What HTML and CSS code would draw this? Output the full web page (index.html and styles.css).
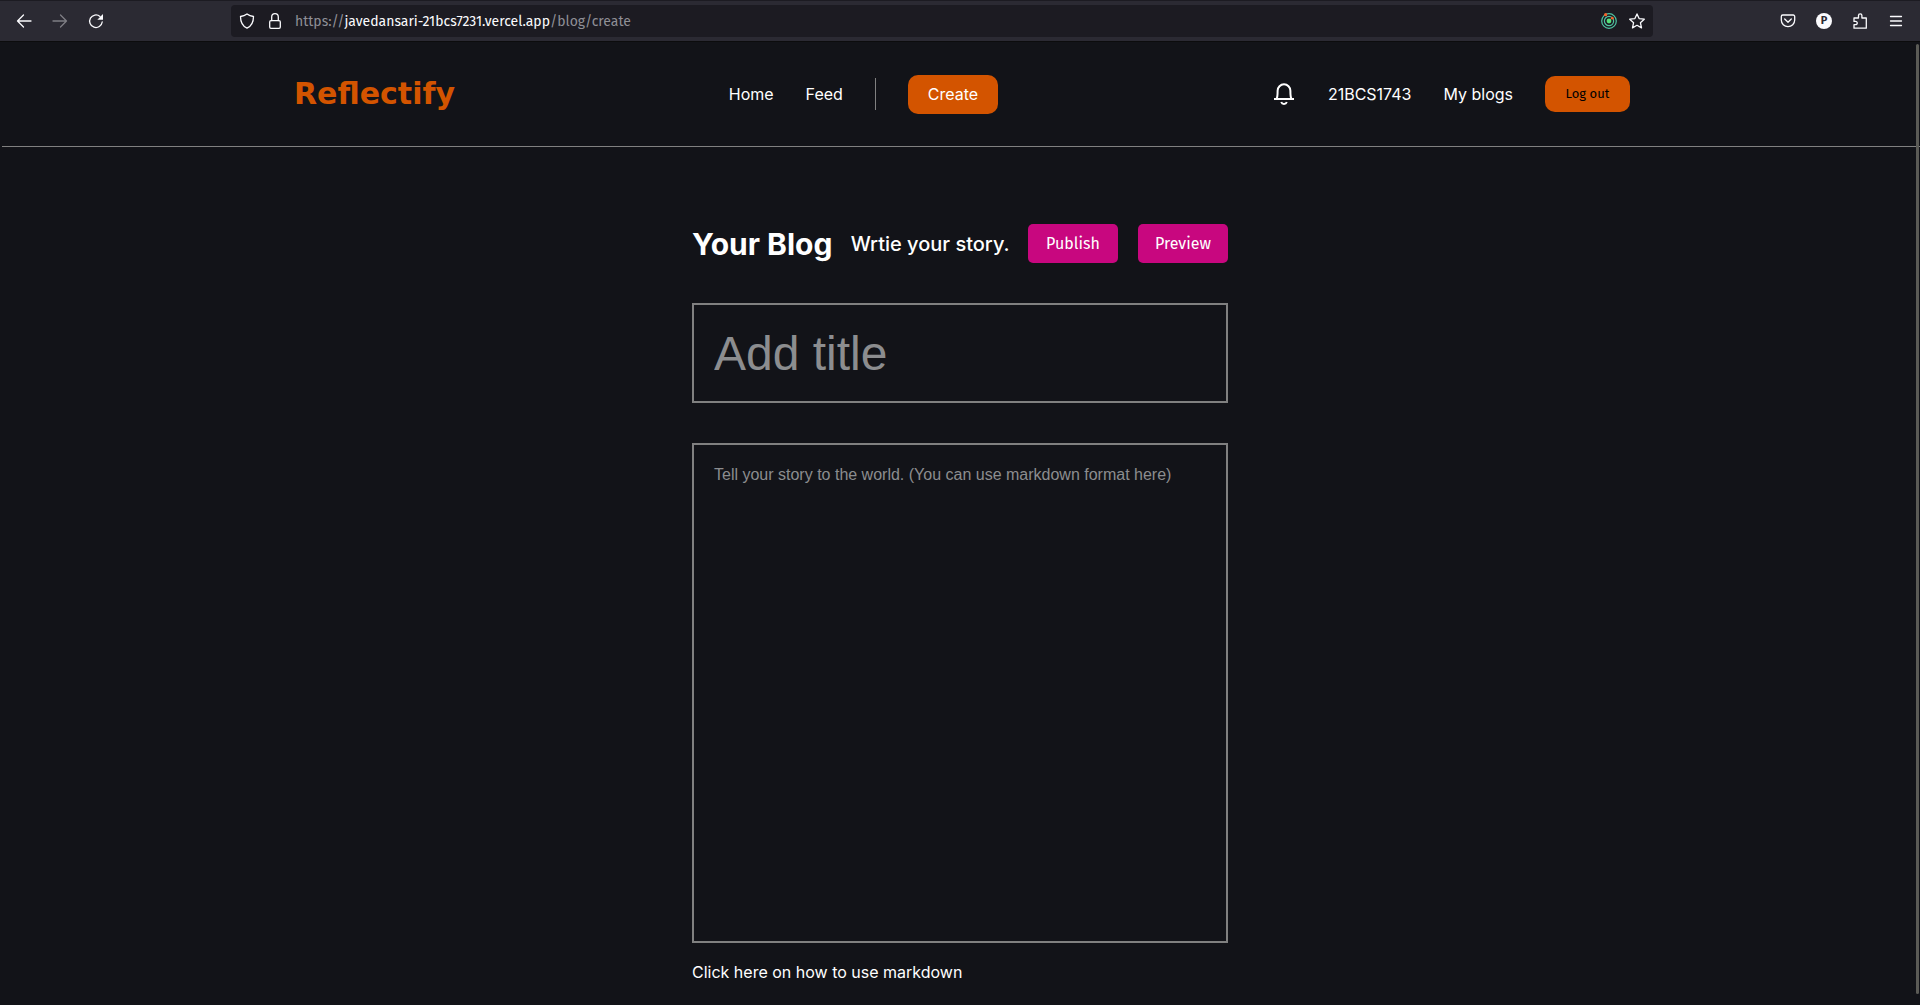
FILE: index.html
```html
<!DOCTYPE html>
<html lang="en">
<head>
<meta charset="utf-8">
<title>Reflectify</title>
<link rel="stylesheet" href="styles.css">
</head>
<body>
<div class="toolbar">
  <div class="tools tools-nav">
    <button class="tool" aria-label="Back"><svg viewBox="0 0 16 16"><path d="M15 8H1.500M7.500 2 1.500 8l6 6"/></svg></button>
    <button class="tool tool-off" aria-label="Forward"><svg viewBox="0 0 16 16"><path d="M1 8h13.500M8.500 2l6 6-6 6"/></svg></button>
    <button class="tool" aria-label="Reload"><svg viewBox="0 0 16 16"><path d="M14.200 9A6.300 6.300 0 1 1 12 3.400"/><path class="solid" d="M15 1v5.700H9.300z"/></svg></button>
  </div>
  <div class="urlbar">
    <svg viewBox="0 0 16 16"><path d="M8 1c2 1.500 4 2.200 6.500 2.500C14.500 9 12.800 13 8 15.200 3.200 13 1.500 9 1.500 3.500 4 3.200 6 2.500 8 1z"/></svg>
    <svg class="lock" viewBox="0 0 16 16"><rect x="2.700" y="7.700" width="10.600" height="7.600" rx="1.300"/><path d="M4.700 7.500V4a3.300 3.300 0 0 1 6.600 0v3.500"/></svg>
    <p class="url">https://<span>javedansari-21bcs7231.vercel.app</span>/blog/create</p>
    <svg class="rings" viewBox="0 0 16 16"><circle cx="8" cy="8" r="7.300"/><circle cx="8" cy="8" r="4.600"/><circle class="core" cx="8" cy="8" r="2.400"/><circle class="dot" cx="4.600" cy="1.700" r="1.600"/><circle class="dot" cx="11.300" cy="5.200" r="1.400"/></svg>
    <svg viewBox="0 0 16 16"><path d="M8 .9l2.100 4.700 5.200.6-3.900 3.500 1.100 5.200L8 12.300l-4.500 2.600 1.100-5.200L.7 6.200l5.200-.6z"/></svg>
  </div>
  <div class="tools tools-end">
    <button class="tool" aria-label="Save to Pocket"><svg viewBox="0 0 16 16"><path d="M2.800 2h10.400a1.500 1.500 0 0 1 1.500 1.500V7a6.700 6.700 0 0 1-13.400 0V3.500A1.500 1.500 0 0 1 2.800 2z"/><path d="M4.700 6 8 9.200 11.300 6"/></svg></button>
    <button class="tool avatar" aria-label="Profile">P</button>
    <button class="tool" aria-label="Extensions"><svg viewBox="0 0 16 16"><path d="M2 5h4.500V2.500a1.700 1.700 0 0 1 3.400 0V5h4.400v10.200H2v-3.500h1.600a1.600 1.600 0 0 0 0-3.300H2z"/></svg></button>
    <button class="tool" aria-label="Menu"><svg viewBox="0 0 16 16"><path d="M2.500 3.500h11M2.500 8h11M2.500 12.500h11"/></svg></button>
  </div>
</div>

<header class="header">
  <div class="header-inner">
    <a class="logo" href="#">Reflectify</a>
    <nav class="links">
      <a href="#">Home</a>
      <a href="#">Feed</a>
      <span class="divider"></span>
      <a class="create" href="#">Create</a>
    </nav>
    <div class="links">
      <a class="bell" href="#" aria-label="Notifications"><svg viewBox="0 0 24 24"><path d="M2 17h20M4.400 17c1.300-2 1.200-4.500 1.200-8.300a6.400 6.400 0 0 1 12.800 0c0 3.800-.1 6.300 1.200 8.300"/><path d="M9.200 20a3 3 0 0 0 5.600 0"/></svg></a>
      <a href="#">21BCS1743</a>
      <a href="#">My blogs</a>
      <button class="logout">Log out</button>
    </div>
  </div>
</header>

<main class="editor">
  <div class="editor-head">
    <h1>Your Blog</h1>
    <p>Wrtie your story.</p>
    <div class="actions">
      <button>Publish</button>
      <button>Preview</button>
    </div>
  </div>
  <input class="field title" type="text" aria-label="Title" placeholder="Add title">
  <textarea class="field story" aria-label="Story" placeholder="Tell your story to the world. (You can use markdown format here)"></textarea>
  <a class="help" href="#">Click here on how to use markdown</a>
</main>
<div class="scroll-thumb"></div>
</body>
</html>
```
FILE: styles.css
```css
* { box-sizing: border-box; }

body {
  margin: 0;
  background: #121318;
  color: #fff;
  font: 16px/24px Inter, sans-serif;
}

a { color: inherit; text-decoration: none; }
h1, p { margin: 0; }
button { border: 0; cursor: pointer; font-family: "Fira Sans", "Open Sans", sans-serif; }

.toolbar {
  display: grid;
  grid-template-columns: 231px 1fr 267px;
  align-items: center;
  height: 42px;
  background: #2b2a33;
  border-top: 1px solid #1c1b22;
  border-bottom: 1px solid #0c0c0d;
}

.toolbar svg {
  flex: none;
  width: 16px;
  height: 16px;
  fill: none;
  stroke: #fbfbfe;
  stroke-width: 1.3;
  stroke-linecap: round;
  stroke-linejoin: round;
}
.toolbar .solid { fill: #fbfbfe; stroke: none; }

.tools { display: flex; gap: 20px; }
.tools-nav { padding-left: 16px; }
.tools-end { justify-content: flex-end; padding-right: 16px; }

.tool {
  display: grid;
  place-items: center;
  width: 16px;
  height: 16px;
  padding: 0;
  background: none;
}
.tool-off { opacity: 0.4; }
.avatar {
  border-radius: 50%;
  background: #fbfbfe;
  color: #2b2a33;
  font-size: 11px;
  font-weight: 700;
  line-height: 16px;
}

.urlbar {
  display: flex;
  align-items: center;
  gap: 12px;
  height: 32px;
  padding: 0 8px;
  border-radius: 4px;
  background: #1c1b22;
}
.url {
  flex: 1;
  padding-top: 2px;
  font: 14px/20px "Fira Sans", "Open Sans", sans-serif;
  color: #8f8f96;
}
.url span { color: #fbfbfe; }
.toolbar .rings { stroke: #4fc3a1; stroke-width: 1.2; }
.rings .core { fill: #55e07a; stroke: none; }
.rings .dot { fill: #f4622a; stroke: none; }

.header {
  margin-left: 2px;
  padding-left: 2px;
  border-bottom: 1px solid #808080;
}
.header-inner {
  display: flex;
  align-items: center;
  justify-content: space-between;
  max-width: 1336px;
  height: 104px;
  margin: 0 auto;
}
.logo {
  color: #d35400;
  font: 700 30px/36px "DejaVu Sans", sans-serif;
}
.links { display: flex; align-items: center; gap: 32px; }
.divider { width: 1px; height: 32px; background: #808080; }
.create {
  padding: 7px 20px 8px;
  border-radius: 10px;
  background: #d35400;
}
.bell { height: 24px; }
.bell svg {
  width: 24px;
  height: 24px;
  fill: none;
  stroke: #fff;
  stroke-width: 2;
}
.logout {
  width: 85px;
  height: 36px;
  padding: 0 0 2px;
  border-radius: 10px;
  background: #d35400;
  color: #000;
  font-size: 13px;
}

.editor {
  display: flex;
  flex-direction: column;
  max-width: 536px;
  margin: 0 auto;
  padding: 77px 0 20px;
}
.editor-head {
  display: flex;
  align-items: center;
  justify-content: space-between;
  margin-bottom: 40px;
}
.editor-head h1 { font-size: 30px; line-height: 36px; }
.editor-head p { font-size: 20px; font-weight: 500; }
.actions { display: flex; gap: 20px; }
.actions button {
  width: 90px;
  height: 39px;
  padding: 0;
  border-radius: 5px;
  background: #c8077f;
  color: #fff;
  font-size: 16px;
}

.field {
  width: 100%;
  padding: 20px;
  border: 2px solid #808080;
  border-radius: 0;
  background: transparent;
  color: #fff;
  font-family: "Liberation Sans", sans-serif;
}
.field::placeholder { color: #8c8d8f; opacity: 1; }
.title { height: 100px; margin-bottom: 40px; font-size: 48px; }
.story { height: 500px; margin-bottom: 17px; font-size: 16px; line-height: 20px; resize: none; }
.help { align-self: flex-start; }

/* Overlay scrollbar thumb along the right edge */
.scroll-thumb {
  position: absolute;
  top: 44px;
  right: 1px;
  bottom: 11px;
  width: 3px;
  border-radius: 2px;
  background: #5b5b56;
}
```
